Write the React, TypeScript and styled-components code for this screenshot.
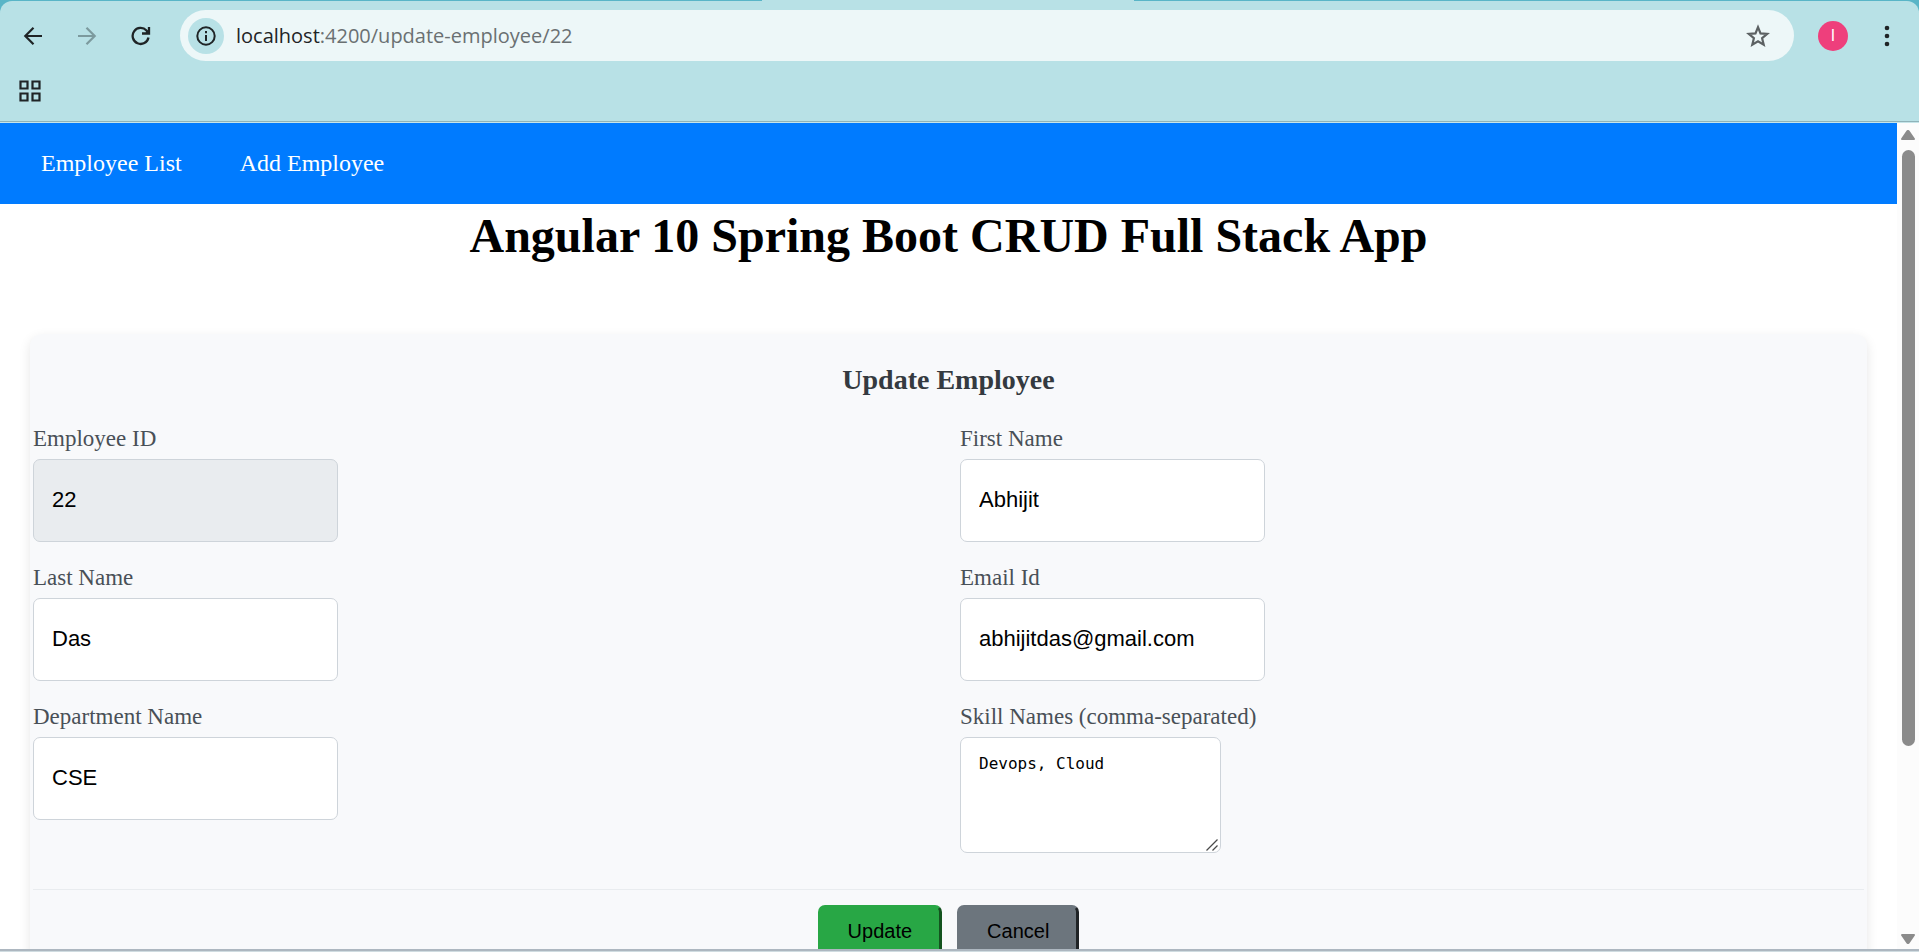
import React from "react";
import styled, { createGlobalStyle } from "styled-components";

const GlobalStyle = createGlobalStyle`
  *, *::before, *::after { box-sizing: border-box; }
  html, body, #root { height: 100%; }
  body {
    margin: 0;
    background: #d0dce1;
    font-family: "Liberation Serif", "Times New Roman", serif;
    color: #000000;
  }
`;

const Window = styled.div`
  display: flex;
  flex-direction: column;
  height: calc(100vh - 1px);
  overflow: hidden;
  background: #59b5c7;
  border-bottom: 2px solid #adb7c0;
`;

const TopStrip = styled.div`
  height: 1px;
  flex: none;
  display: flex;
  padding-left: 762px;
  &::before {
    content: "";
    width: 372px;
    background: #b8e1e6;
  }
`;

const Chrome = styled.header`
  flex: none;
  background: #b8e1e6;
  border-radius: 12px 12px 0 0;
  border-bottom: 1px solid #8fb3b9;
  padding: 9px 16px 14px 17px;
`;

const Toolbar = styled.div`
  display: flex;
  align-items: center;
`;

const IconButton = styled.button<{ $dim?: boolean }>`
  display: flex;
  align-items: center;
  justify-content: center;
  width: 32px;
  height: 32px;
  padding: 0;
  border: 0;
  background: transparent;
  color: ${(p) => (p.$dim ? "#7c9a9e" : "#1f2426")};
`;

const NavButtons = styled.div`
  display: flex;
  gap: 22px;
  margin-right: 23px;
`;

const AddressBar = styled.div`
  flex: 1;
  display: flex;
  align-items: center;
  height: 51px;
  padding: 0 20px 0 8px;
  border-radius: 26px;
  background: #edf7f8;
`;

const SiteInfo = styled(IconButton)`
  width: 36px;
  height: 36px;
  border-radius: 50%;
  background: #b8e1e6;
`;

const Url = styled.div`
  flex: 1;
  margin-left: 12px;
  font-family: "Open Sans", "Segoe UI", sans-serif;
  font-size: 20px;
  line-height: 28px;
  color: #6a7072;
`;

const Host = styled.span`
  color: #1f2426;
`;

const Avatar = styled.button`
  width: 30px;
  height: 30px;
  margin: 0 23px 0 24px;
  padding: 0;
  border: 0;
  border-radius: 50%;
  background: #ee3f7c;
  color: #ffffff;
  font: 16px/30px Roboto, sans-serif;
`;

const Bookmarks = styled.div`
  display: flex;
  margin: 14px 0 0 -3px;
`;

const Viewport = styled.div`
  flex: 1;
  min-height: 0;
  display: flex;
  background: #ffffff;
  border-top: 1px solid #c6e5e9;
`;

const Page = styled.main`
  flex: 1;
  min-width: 0;
  overflow: hidden;
`;

const Scrollbar = styled.div`
  flex: none;
  width: 22px;
  display: flex;
  flex-direction: column;
  align-items: center;
  justify-content: space-between;
  padding: 6px 0 4px;
  background: #fcfcfc;
`;

const Track = styled.div`
  flex: 1;
  margin: 9px 0;
`;

const Thumb = styled.div`
  width: 13px;
  height: 77%;
  border-radius: 7px;
  background: #8b8b8b;
`;

const NavBar = styled.nav`
  display: flex;
  align-items: center;
  gap: 58px;
  height: 81px;
  padding: 0 41px 2px;
  background: #007bff;
`;

const NavLink = styled.a`
  color: #ffffff;
  font-size: 24px;
  line-height: 28px;
  text-decoration: none;
`;

const Title = styled.h1`
  margin: 0;
  padding: 2px 0;
  text-align: center;
  font-size: 48px;
  line-height: 60px;
`;

const Card = styled.section`
  margin: 66px 30px 0;
  padding: 29px 3px;
  border-radius: 12px;
  background: #f8f9fb;
  box-shadow: 0 4px 12px rgba(0, 0, 0, 0.1);
`;

const CardTitle = styled.h2`
  margin: 0 0 28px;
  text-align: center;
  font-size: 28px;
  line-height: 34px;
  color: #343a40;
`;

const FieldGrid = styled.div`
  display: grid;
  grid-template-columns: 1fr 1fr;
  gap: 22px 23px;
`;

const Field = styled.div`
  display: flex;
  flex-direction: column;
  align-items: flex-start;
`;

const Label = styled.label`
  margin-bottom: 6px;
  font-size: 23px;
  line-height: 28px;
  color: #495057;
`;

const TextInput = styled.input`
  width: 305px;
  height: 83px;
  padding: 0 18px 2px;
  border: 1px solid #ced4da;
  border-radius: 7px;
  background: #ffffff;
  color: #000000;
  font: 22px "Liberation Sans", Arial, sans-serif;
  &:read-only { background: #e9ecef; }
`;

const TextAreaFrame = styled.div`
  position: relative;
`;

const TextArea = styled.textarea`
  display: block;
  width: 261px;
  height: 116px;
  padding: 14px 18px;
  border: 1px solid #ced4da;
  border-radius: 7px;
  background: #ffffff;
  color: #000000;
  font: 16px/24px "DejaVu Sans Mono", monospace;
  resize: both;
  &::-webkit-resizer { background: transparent; }
`;

const ResizeGrip = styled.svg`
  position: absolute;
  right: 3px;
  bottom: 2px;
  pointer-events: none;
`;

const Actions = styled.div`
  display: flex;
  justify-content: center;
  gap: 15px;
  margin-top: 36px;
  padding-top: 15px;
  border-top: 1px solid #e9ecef;
`;

const ActionButton = styled.button<{ $tone: string; $edge: string }>`
  height: 52px;
  padding: 0 27px;
  border: 3px solid ${(p) => p.$tone};
  border-right-color: ${(p) => p.$edge};
  border-bottom-color: ${(p) => p.$edge};
  border-radius: 7px;
  background: ${(p) => p.$tone};
  color: #000000;
  font: 20px "Liberation Sans", Arial, sans-serif;
`;

const fields = [
  { id: "employeeId", label: "Employee ID", value: "22", readOnly: true },
  { id: "firstName", label: "First Name", value: "Abhijit" },
  { id: "lastName", label: "Last Name", value: "Das" },
  { id: "emailId", label: "Email Id", value: "abhijitdas@gmail.com" },
  { id: "departmentName", label: "Department Name", value: "CSE" },
];

const BackIcon = () => (
  <svg width="20" height="20" viewBox="0 0 20 20" fill="none" stroke="currentColor" strokeWidth="2.2">
    <path d="M19 10H2.5M10.500 1.800 2.300 10l8.200 8.200" />
  </svg>
);

const ForwardIcon = () => (
  <svg width="20" height="20" viewBox="0 0 20 20" fill="none" stroke="currentColor" strokeWidth="2.2">
    <path d="M1 10h16.500M9.500 1.800 17.700 10 9.500 18.200" />
  </svg>
);

const ReloadIcon = () => (
  <svg width="20" height="20" viewBox="0 0 20 20" fill="none" stroke="currentColor" strokeWidth="2.3">
    <path d="M17.500 11.500A8 8 0 1 1 15.500 4.500L17 6.500" />
    <path d="M18 1v6.500h-7" />
    <path d="m18 3-4 4.500h4z" fill="currentColor" stroke="none" />
  </svg>
);

const InfoIcon = () => (
  <svg width="20" height="20" viewBox="0 0 20 20" fill="none" stroke="currentColor" strokeWidth="2">
    <circle cx="10" cy="10" r="8.700" />
    <path d="M10 9v6M10 5v2.200" />
  </svg>
);

const StarIcon = () => (
  <svg width="24" height="24" viewBox="0 0 24 24" fill="none" stroke="#5c6163" strokeWidth="2.200">
    <path d="m12 3.200 2.500 6.200 6.700.5-5.100 4.300 1.600 6.500-5.700-3.500-5.700 3.500 1.600-6.500-5.100-4.300 6.700-.5z" />
  </svg>
);

const DotsIcon = () => (
  <svg width="6" height="22" viewBox="0 0 6 22" fill="currentColor">
    <circle cx="3" cy="3" r="2.300" />
    <circle cx="3" cy="11" r="2.300" />
    <circle cx="3" cy="19" r="2.300" />
  </svg>
);

const AppsIcon = () => (
  <svg width="22" height="22" viewBox="0 0 22 22" fill="none" stroke="currentColor" strokeWidth="2.200">
    <path d="M1.500 1.500h7v7h-7zM13.500 1.500h7v7h-7zM1.500 13.500h7v7h-7zM13.500 13.500h7v7h-7z" />
  </svg>
);

const ArrowIcon = ({ down }: { down?: boolean }) => (
  <svg width="16" height="12" viewBox="0 0 16 12" fill="#8b8b8b" stroke="#8b8b8b" strokeWidth="2" strokeLinejoin="round">
    <path d={down ? "M2 2h12L8.500 10h-1z" : "M2 10h12L8.500 2h-1z"} />
  </svg>
);

export default function App() {
  return (
    <Window>
      <GlobalStyle />
      <TopStrip />
      <Chrome>
        <Toolbar>
          <NavButtons>
            <IconButton aria-label="Back"><BackIcon /></IconButton>
            <IconButton aria-label="Forward" $dim><ForwardIcon /></IconButton>
            <IconButton aria-label="Reload"><ReloadIcon /></IconButton>
          </NavButtons>
          <AddressBar>
            <SiteInfo aria-label="Site information"><InfoIcon /></SiteInfo>
            <Url><Host>localhost</Host>:4200/update-employee/22</Url>
            <IconButton aria-label="Bookmark"><StarIcon /></IconButton>
          </AddressBar>
          <Avatar>I</Avatar>
          <IconButton aria-label="Menu"><DotsIcon /></IconButton>
        </Toolbar>
        <Bookmarks>
          <IconButton aria-label="Apps"><AppsIcon /></IconButton>
        </Bookmarks>
      </Chrome>
      <Viewport>
        <Page>
          <NavBar>
            <NavLink href="#employees">Employee List</NavLink>
            <NavLink href="#add">Add Employee</NavLink>
          </NavBar>
          <Title>Angular 10 Spring Boot CRUD Full Stack App</Title>
          <Card>
            <CardTitle>Update Employee</CardTitle>
            <form>
              <FieldGrid>
                {fields.map((f) => (
                  <Field key={f.id}>
                    <Label htmlFor={f.id}>{f.label}</Label>
                    <TextInput id={f.id} defaultValue={f.value} readOnly={f.readOnly} />
                  </Field>
                ))}
                <Field>
                  <Label htmlFor="skills">Skill Names (comma-separated)</Label>
                  <TextAreaFrame>
                    <TextArea id="skills" defaultValue="Devops, Cloud" spellCheck={false} />
                    <ResizeGrip width="12" height="12" viewBox="0 0 12 12" stroke="#4a4a4a" strokeWidth="1.300">
                      <path d="M.5 11.500 11.500.5M6.500 11.500l5-5" />
                    </ResizeGrip>
                  </TextAreaFrame>
                </Field>
              </FieldGrid>
              <Actions>
                <ActionButton type="button" $tone="#28a745" $edge="#14531f">Update</ActionButton>
                <ActionButton type="button" $tone="#6c757d" $edge="#1f2326">Cancel</ActionButton>
              </Actions>
            </form>
          </Card>
        </Page>
        <Scrollbar aria-hidden="true">
          <ArrowIcon />
          <Track><Thumb /></Track>
          <ArrowIcon down />
        </Scrollbar>
      </Viewport>
    </Window>
  );
}
